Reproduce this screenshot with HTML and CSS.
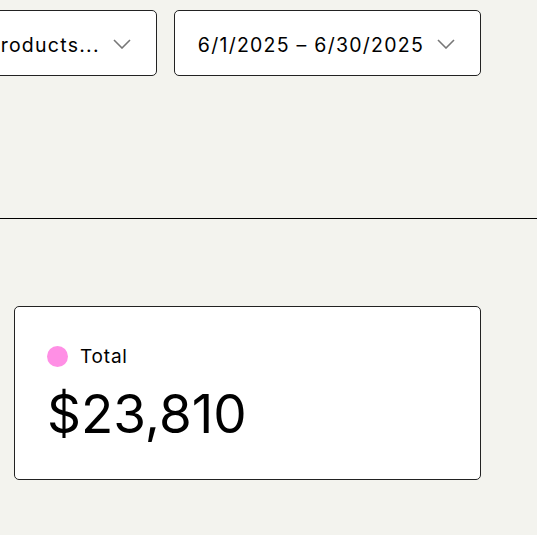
FILE: index.html
```html
<!DOCTYPE html>
<html>
<head>
<meta charset="utf-8">
<link rel="stylesheet" href="styles.css">
</head>
<body>
<div class="page">
  <div class="filters">
    <div class="select select-products">
      <span class="select-label">Select products...</span>
      <svg class="chev" width="18" height="10" viewBox="0 0 18 10"><path d="M1 1 L9 9 L17 1" fill="none" stroke="#777" stroke-width="1.6"/></svg>
    </div>
    <div class="select select-date">
      <span class="select-label">6/1/2025 – 6/30/2025</span>
      <svg class="chev" width="18" height="10" viewBox="0 0 18 10"><path d="M1 1 L9 9 L17 1" fill="none" stroke="#777" stroke-width="1.6"/></svg>
    </div>
  </div>
  <hr class="divider">
  <div class="cards">
    <div class="card">
      <div class="legend"><span class="dot"></span><span class="legend-label">Total</span></div>
      <div class="value">$23,810</div>
    </div>
  </div>
</div>
</body>
</html>
```
FILE: styles.css
```css
html, body {
  margin: 0;
  padding: 0;
  background: #f3f3ee;
}
body {
  font-family: Inter, "Noto Sans", sans-serif;
  color: #000;
  overflow: hidden;
}
.page {
  width: 537px;
  height: 535px;
}
.filters {
  display: flex;
  justify-content: flex-end;
  gap: 17px;
  padding: 10px 56px 0 0;
  height: 65px;
}
.select {
  flex: none;
  box-sizing: border-box;
  height: 66px;
  display: flex;
  align-items: center;
  gap: 13px;
  background: #fff;
  border: 1px solid #222;
  border-radius: 5px;
  padding: 3px 25px 0 23px;
  font-size: 19.5px;
  letter-spacing: 1.25px;
  white-space: nowrap;
}
.chev {
  display: block;
  margin-top: -2px;
}
.divider {
  margin: 143px 0 0 0;
  border: none;
  border-top: 1px solid #000;
  height: 0;
}
.cards {
  padding: 87px 0 0 14px;
}
.card {
  box-sizing: border-box;
  width: 467px;
  height: 174px;
  background: #fff;
  border: 1px solid #222;
  border-radius: 5px;
  padding: 38px 0 0 32px;
}
.legend {
  display: flex;
  align-items: center;
  gap: 12px;
}
.dot {
  width: 21px;
  height: 21px;
  border-radius: 50%;
  background: #ff8fe5;
}
.legend-label {
  font-size: 19px;
  letter-spacing: 0.8px;
}
.value {
  font-size: 53px;
  line-height: 1;
  margin-top: 20px;
  letter-spacing: 0;
}
```
